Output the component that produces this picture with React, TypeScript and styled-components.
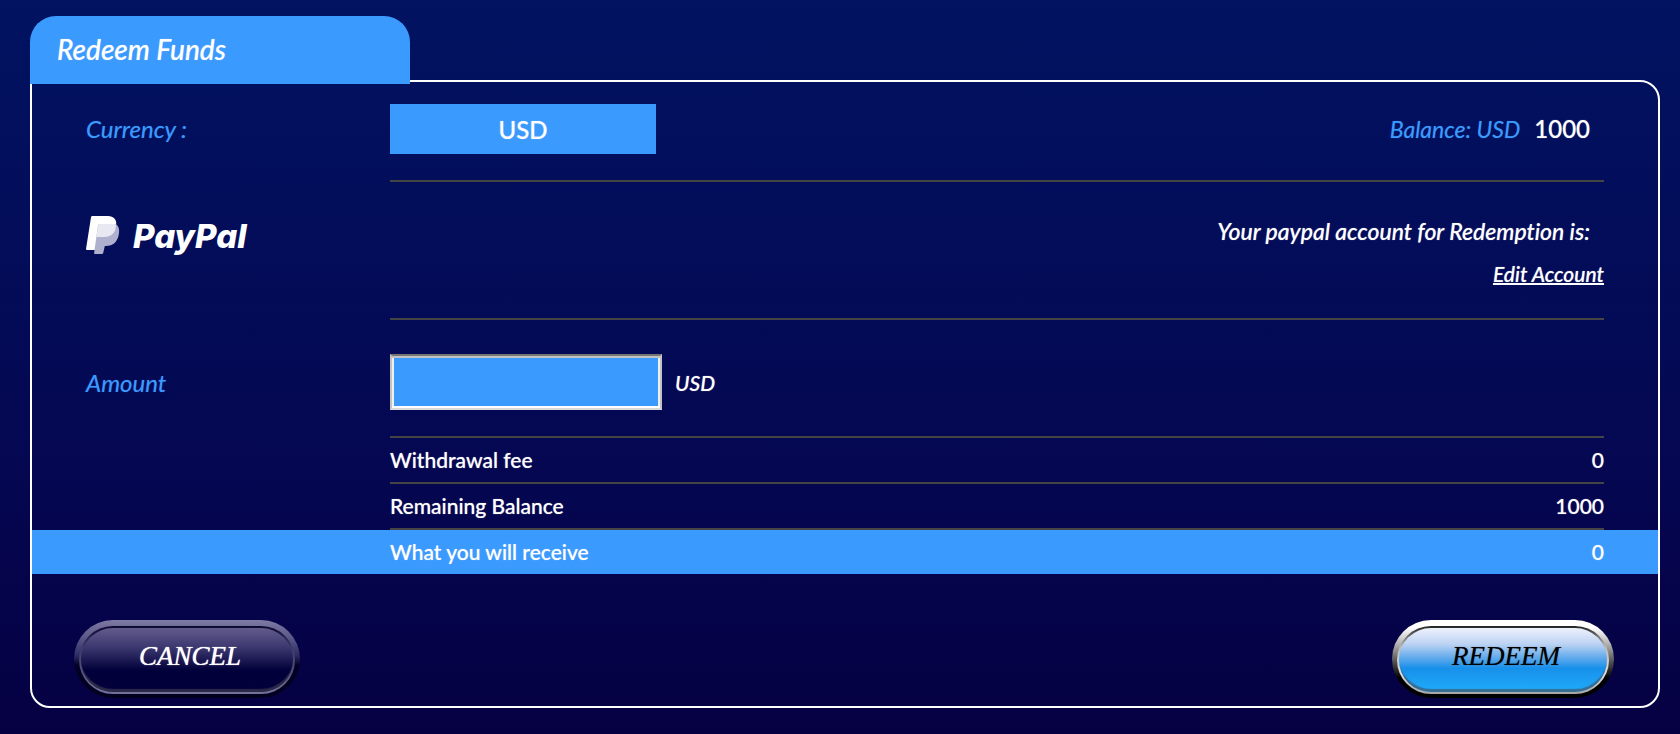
import React, { useState } from "react";
import styled, { createGlobalStyle, css } from "styled-components";

const GlobalStyle = createGlobalStyle`
  *, *::before, *::after { box-sizing: border-box; }
  html { min-height: 100%; background: #050042; }
  body {
    margin: 0;
    font-family: Lato, "Open Sans", sans-serif;
    font-variant-ligatures: none;
    color: #fff;
    background: #050042;
  }
`;

const blue = "#3b9afe";

const strong = css`
  font-weight: 500;
  text-shadow: 0 0 1px rgba(255, 255, 255, 0.6);
`;

const Page = styled.main`
  min-height: 100vh;
  padding: 16px 20px 26px 30px;
  background: linear-gradient(#011361, #050650 68%, #050042);
`;

const Tab = styled.h1`
  position: relative;
  width: 380px;
  max-width: 100%;
  margin: 0 0 -4px;
  padding: 0 27px 2px;
  border-radius: 26px 26px 0 0;
  background: ${blue};
  font-size: 28px;
  font-style: italic;
  line-height: 66px;
  ${strong}
`;

const Panel = styled.form`
  border: 2px solid #fff;
  border-radius: 0 20px 20px 20px;
  padding-bottom: 8px;
`;

const Row = styled.div<{ $highlight?: boolean }>`
  display: grid;
  grid-template-columns: 304px 1fr;
  padding: 0 54px;
  background: ${(p) => (p.$highlight ? blue : "transparent")};
`;

const Label = styled.label<{ $top: number }>`
  padding-top: ${(p) => p.$top}px;
  color: ${blue};
  font-size: 24px;
  font-style: italic;
  line-height: 50px;
  text-shadow: 0 0 1px rgba(59, 154, 254, 0.5);
`;

const Field = styled.div<{ $top: number }>`
  display: flex;
  align-items: center;
  padding: ${(p) => p.$top}px 0 26px;
  border-bottom: 2px solid #444;
`;

const CurrencySelect = styled.select`
  appearance: none;
  width: 266px;
  height: 50px;
  border: 0;
  border-radius: 0;
  padding: 0;
  background: ${blue};
  color: #fff;
  font: 24px Lato, sans-serif;
  text-align: center;
  text-align-last: center;
  ${strong}
`;

const Balance = styled.p`
  display: flex;
  gap: 14px;
  margin: 0 0 0 auto;
  padding-right: 14px;
  color: ${blue};
  font-size: 23px;
  font-style: italic;
  line-height: 50px;
  text-shadow: 0 0 1px rgba(59, 154, 254, 0.5);
`;

const BalanceValue = styled.span`
  color: #fff;
  font-size: 24px;
  font-style: normal;
  ${strong}
`;

const Brand = styled.div`
  display: flex;
  align-items: flex-start;
  gap: 13px;
  padding-top: 34px;
`;

const BrandName = styled.span`
  font-family: Inter, Lato, sans-serif;
  font-size: 33px;
  font-style: italic;
  font-weight: 800;
  line-height: 40px;
`;

const Account = styled.div`
  display: flex;
  flex-direction: column;
  align-items: flex-end;
  padding: 24px 0 26px;
  border-bottom: 2px solid #444;
  font-style: italic;
  ${strong}
`;

const AccountText = styled.p`
  margin: 0;
  padding-right: 14px;
  font-size: 23px;
  line-height: 50px;
`;

const AccountLink = styled.a`
  color: #fff;
  font-size: 21px;
  line-height: 36px;
  text-decoration-thickness: 2px;
`;

const AmountInput = styled.input`
  width: 272px;
  height: 56px;
  border: 2px solid;
  border-color: #767676 #c3c3c3 #dadada #c3c3c3;
  border-radius: 0;
  padding: 2px 10px;
  background: ${blue};
  box-shadow: inset 0 2px #c3c3c3, inset 0 -2px #fff, inset 2px 0 #f0f0f0, inset -2px 0 #f0f0f0;
  color: #fff;
  font: 21px Lato, sans-serif;
  outline: 0;
`;

const Unit = styled.span`
  padding-left: 13px;
  font-size: 21px;
  font-style: italic;
  ${strong}
`;

const Summary = styled.dl`
  margin: 0;
`;

const Line = styled.div<{ $last?: boolean }>`
  grid-column: 2;
  display: flex;
  justify-content: space-between;
  border-bottom: ${(p) => (p.$last ? 0 : "2px solid #444")};
  font-size: 21px;
  line-height: 44px;
  ${strong}
`;

const Value = styled.dd`
  margin: 0;
`;

const Actions = styled.div`
  display: flex;
  justify-content: space-between;
  padding: 46px 44px 0 42px;
`;

const cancelSkin = css`
  color: #fff;
  text-shadow: 0 0 1px currentColor;
  background: linear-gradient(#7d7aa4, #5c5988 22%, #302d66 45%, #030124 58%, #02001f);
  &::before {
    background:
      linear-gradient(#625c8c, #3c3870 30%, #02003a 66%, #03003c) padding-box,
      linear-gradient(#0b0830, #3b386a 30%, #55527e 70%, #75729a) border-box;
  }
`;

const redeemSkin = css`
  color: #000;
  text-shadow: 0 0 1px rgba(0, 0, 0, 0.5);
  background: linear-gradient(#fff 10%, #b5b5b5 30%, #4c4c4c 55%, #000 75%);
  &::before {
    background:
      linear-gradient(#eef1fc, #bcd3f3 25%, #5fa9ec 47%, #1890ea 63%, #20acfb) padding-box,
      linear-gradient(#222, #b9b9b9 30%, #e0e0e0 70%, #a5a5a5) border-box;
  }
`;

const PillButton = styled.button<{ $primary?: boolean }>`
  position: relative;
  isolation: isolate;
  width: ${(p) => (p.$primary ? 222 : 226)}px;
  height: 78px;
  border: 0;
  border-radius: 39px;
  padding: 0 0 6px 6px;
  font: italic 27px "Liberation Serif", "Times New Roman", serif;
  cursor: pointer;
  &::before {
    content: "";
    position: absolute;
    z-index: -1;
    inset: 6px 5px 4px;
    border: 2px solid transparent;
    border-radius: 34px;
    box-shadow: inset 0 -4px 1px -1px rgba(70, 70, 80, 0.6);
  }
  ${(p) => (p.$primary ? redeemSkin : cancelSkin)}
`;

const PayPalMark = () => (
  <svg width="34" height="40" viewBox="0 0 34 40" aria-hidden="true">
    <path d="M6.300 0H22c5.600 0 8.800 3.600 8.200 8.500L20 24h-8.500L9.500 34H1Q0 34 0 33L5 1.200Q5.200 0 6.300 0z" fill="#fff" />
    <path
      d="M13.500 8H29.800c2.900 2.200 3.800 5 3.200 9C31.900 26 27 30 20 30h-1.200L17.200 37Q17 38 16 38H8.900Q8 38 8.100 37L12 9.200Q12.200 8 13.500 8z"
      fill="#aeb0cd"
    />
    <path d="M13.500 8H29.800C30.600 16 25.500 21 18.500 21h-8L12 9.200Q12.200 8 13.500 8z" fill="#e7e8f1" />
  </svg>
);

export default function App() {
  const [amount, setAmount] = useState("");
  return (
    <>
      <GlobalStyle />
      <Page>
        <Tab>Redeem Funds</Tab>
        <Panel onSubmit={(e) => e.preventDefault()}>
          <Row>
            <Label htmlFor="currency" $top={22}>Currency :</Label>
            <Field $top={22}>
              <CurrencySelect id="currency" defaultValue="USD">
                <option>USD</option>
              </CurrencySelect>
              <Balance>
                Balance: USD <BalanceValue>1000</BalanceValue>
              </Balance>
            </Field>
          </Row>
          <Row>
            <Brand>
              <PayPalMark />
              <BrandName>PayPal</BrandName>
            </Brand>
            <Account>
              <AccountText>Your paypal account for Redemption is:</AccountText>
              <AccountLink href="#account">Edit Account</AccountLink>
            </Account>
          </Row>
          <Row>
            <Label htmlFor="amount" $top={38}>Amount</Label>
            <Field $top={34}>
              <AmountInput id="amount" value={amount} onChange={(e) => setAmount(e.target.value)} />
              <Unit>USD</Unit>
            </Field>
          </Row>
          <Summary>
            <Row>
              <Line>
                <dt>Withdrawal fee</dt>
                <Value>0</Value>
              </Line>
            </Row>
            <Row>
              <Line>
                <dt>Remaining Balance</dt>
                <Value>1000</Value>
              </Line>
            </Row>
            <Row $highlight>
              <Line $last>
                <dt>What you will receive</dt>
                <Value>0</Value>
              </Line>
            </Row>
          </Summary>
          <Actions>
            <PillButton type="button">CANCEL</PillButton>
            <PillButton type="submit" $primary>REDEEM</PillButton>
          </Actions>
        </Panel>
      </Page>
    </>
  );
}
